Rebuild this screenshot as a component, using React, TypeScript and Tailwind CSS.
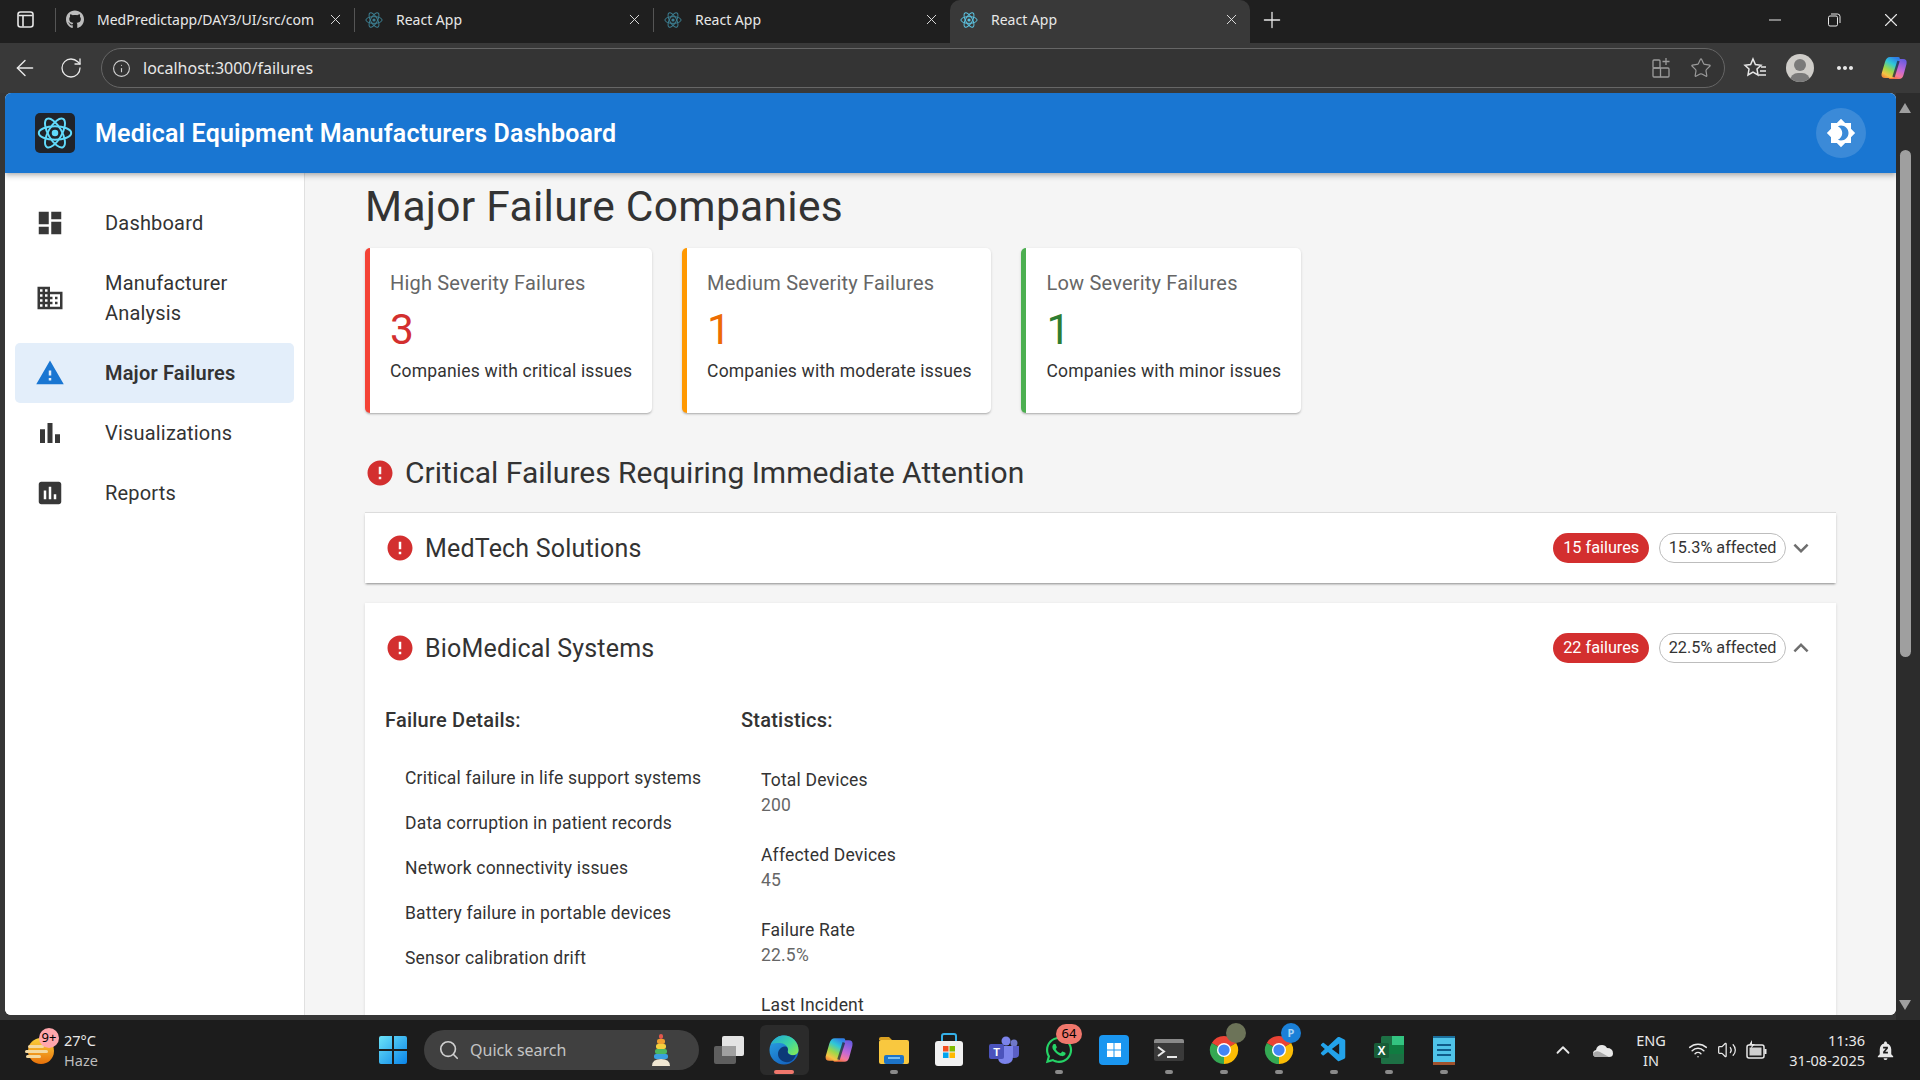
import {
  MdDashboard,
  MdDomain,
  MdWarning,
  MdBarChart,
  MdAssessment,
  MdError,
  MdExpandMore,
  MdExpandLess,
  MdBrightness4,
  MdMoreHoriz,
  MdNotificationsPaused,
} from "react-icons/md";
import { FaGithub, FaWhatsapp } from "react-icons/fa";
import { VscVscode } from "react-icons/vsc";
import { ArrowLeft, ChevronUp, Info, Plus, RotateCw, Search, Star, Volume2, Wifi, X } from "lucide-react";

const navItems = [
  { label: "Dashboard", icon: MdDashboard },
  { label: "Manufacturer Analysis", icon: MdDomain },
  { label: "Major Failures", icon: MdWarning, active: true },
  { label: "Visualizations", icon: MdBarChart },
  { label: "Reports", icon: MdAssessment },
];

const summary = [
  { title: "High Severity Failures", value: "3", text: "Companies with critical issues", border: "border-[#f44336]", color: "text-[#d32f2f]" },
  { title: "Medium Severity Failures", value: "1", text: "Companies with moderate issues", border: "border-[#ff9800]", color: "text-[#ed6c02]" },
  { title: "Low Severity Failures", value: "1", text: "Companies with minor issues", border: "border-[#4caf50]", color: "text-[#2e7d32]" },
];

const details = [
  "Critical failure in life support systems",
  "Data corruption in patient records",
  "Network connectivity issues",
  "Battery failure in portable devices",
  "Sensor calibration drift",
];

const stats = [
  { label: "Total Devices", value: "200" },
  { label: "Affected Devices", value: "45" },
  { label: "Failure Rate", value: "22.5%" },
  { label: "Last Incident" },
];

function Atom({ size = 18, color = "#61dafb" }: { size?: number; color?: string }) {
  return (
    <svg width={size} height={size} viewBox="0 0 40 40" fill="none" stroke={color} strokeWidth="2.2">
      <ellipse cx="20" cy="20" rx="18" ry="7.5" />
      <ellipse cx="20" cy="20" rx="18" ry="7.5" transform="rotate(60 20 20)" />
      <ellipse cx="20" cy="20" rx="18" ry="7.5" transform="rotate(120 20 20)" />
      <circle cx="20" cy="20" r="3.6" fill={color} stroke="none" />
    </svg>
  );
}

function Tab({ title, icon, width, active }: { title: string; icon: React.ReactNode; width: string; active?: boolean }) {
  return (
    <div className={`flex h-[43px] shrink-0 items-center pb-[4px] pl-[10px] text-[14px] text-[#e8e8e8] ${width} ${active ? "rounded-t-[10px] bg-[#393939]" : ""}`}>
      <span className="flex w-[18px] shrink-0 justify-center">{icon}</span>
      <span className="ml-[13px] flex-1 whitespace-nowrap">{title}</span>
      <X size={17} strokeWidth={1.3} className="mr-[10px] ml-[8px] shrink-0" />
    </div>
  );
}

function Divider() {
  return <div className="mb-[4px] h-[24px] w-px shrink-0 bg-[#555]" />;
}

function TabStrip() {
  return (
    <div className="flex h-[43px] items-center bg-[#1f1f1f] font-['Noto_Sans',sans-serif]">
      <div className="flex w-[55px] shrink-0 justify-center pb-[4px]">
        <svg width="19" height="19" viewBox="0 0 19 19" fill="none" stroke="#e6e6e6" strokeWidth="1.6" className="-ml-[4px]">
          <rect x="2" y="2" width="15" height="15" rx="2.5" />
          <path d="M2.5 5.5H16.5M7 5.5V16.5" />
        </svg>
      </div>
      <Divider />
      <Tab width="w-[298px]" title="MedPredictapp/DAY3/UI/src/com" icon={<FaGithub size={19} className="text-[#bcbcbc]" />} />
      <Divider />
      <Tab width="w-[298px]" title="React App" icon={<Atom size={18} color="#3d7f92" />} />
      <Divider />
      <Tab width="w-[296px]" title="React App" icon={<Atom size={18} color="#3d7f92" />} />
      <Tab width="w-[300px]" active title="React App" icon={<Atom size={18} color="#5cc4e2" />} />
      <Plus size={26} strokeWidth={1.2} className="mb-[4px] ml-[9px] text-[#e8e8e8]" />
      <div className="mb-[4px] ml-auto flex items-center text-[#e8e8e8]">
        <svg width="14" height="14" viewBox="0 0 14 14" stroke="currentColor" className="mr-[45px]"><path d="M1 7H13" /></svg>
        <svg width="14" height="14" viewBox="0 0 14 14" fill="none" stroke="currentColor" className="mr-[39px]"><rect x="1.5" y="3" width="9" height="10" rx="1.5" /><path d="M4 1H10.5Q13 1 13 3.5V10" /></svg>
        <X size={22} strokeWidth={1.2} className="mr-[18px]" />
      </div>
    </div>
  );
}

function Toolbar() {
  return (
    <div className="flex h-[50px] items-center bg-[#393939] font-['Noto_Sans',sans-serif] text-[#e8e8e8]">
      <ArrowLeft size={26} strokeWidth={1.3} className="ml-[12px]" />
      <RotateCw size={24} strokeWidth={1.3} className="ml-[21px]" />
      <div className="ml-[18px] flex h-[40px] w-[1624px] items-center rounded-[20px] border border-[#666] bg-[#343434] pl-[10px]">
        <Info size={19} strokeWidth={1.4} className="text-[#cfcfcf]" />
        <span className="ml-[12px] text-[16px]">localhost:3000/failures</span>
        <div className="mr-[12px] ml-auto flex items-center gap-[18px] text-[#9a9a9a]">
          <svg width="20" height="22" viewBox="0 0 20 22" fill="none" stroke="currentColor" strokeWidth="1.3">
            <rect x="1" y="3" width="7" height="8" rx="1" />
            <rect x="1" y="11" width="16" height="9" rx="1" />
            <path d="M8.5 11V20M14 1V8M10.5 4.5H17.5" />
          </svg>
          <Star size={22} strokeWidth={1.3} />
        </div>
      </div>
      <svg width="24" height="24" viewBox="0 0 24 24" fill="none" stroke="currentColor" strokeWidth="1.5" className="ml-[18px]">
        <path d="M10 3L12.4 8.6L18 9.2L14 13L15 19L10 16L5 19L6 13L2 9.2L7.6 8.6Z" />
        <path d="M18 11H23M17 15H23M15.5 19H23" />
      </svg>
      <div className="relative ml-[19px] h-[28px] w-[28px] overflow-hidden rounded-full bg-[#cfcdc9]">
        <div className="absolute top-[5px] left-[8px] h-[12px] w-[12px] rounded-full bg-[#7a7a7a]" />
        <div className="absolute top-[19px] left-[4px] h-[16px] w-[20px] rounded-full bg-[#7a7a7a]" />
      </div>
      <MdMoreHoriz size={24} className="ml-[19px]" />
      <div className="ml-[23px]"><Copilot id="cb" size={28} /></div>
    </div>
  );
}

function Copilot({ id, size = 28 }: { id: string; size?: number }) {
  return (
    <svg width={size} height={size} viewBox="0 0 28 28" fill="none">
      <defs>
        <linearGradient id={`${id}a`} x1="0.7" y1="0" x2="0.2" y2="1">
          <stop offset="0" stopColor="#2f7fe8" />
          <stop offset="0.3" stopColor="#2fc8d8" />
          <stop offset="0.6" stopColor="#9bd84a" />
          <stop offset="0.85" stopColor="#f6c445" />
          <stop offset="1" stopColor="#f08a3a" />
        </linearGradient>
        <linearGradient id={`${id}b`} x1="0.7" y1="0" x2="0.3" y2="1">
          <stop offset="0" stopColor="#6a5ce0" />
          <stop offset="0.5" stopColor="#c268d8" />
          <stop offset="0.8" stopColor="#f47a9a" />
          <stop offset="1" stopColor="#f2703a" />
        </linearGradient>
      </defs>
      <path d="M19 25H10Q8 25 9 22L13 8Q14 5 17 5H23Q27.5 5 26.5 10L23.5 21Q22.5 25 19 25Z" fill={`url(#${id}b)`} />
      <path d="M10 3H18Q20.5 3 19.5 6L15 21Q14 24 11 24H5Q1 24 1.5 20L5 8Q6.5 3 10 3Z" fill={`url(#${id}a)`} />
      <path d="M18.5 7L13.5 23" stroke="#26223a" strokeWidth="2.4" opacity="0.75" />
    </svg>
  );
}

function Sidebar() {
  return (
    <nav className="w-[300px] shrink-0 border-r border-[#e0e0e0] bg-white px-[10px] pt-[20px]">
      {navItems.map((item) => {
        const Icon = item.icon;
        return (
          <div key={item.label} className={`flex items-center rounded-[5px] px-[20px] py-[15px] ${item.active ? "bg-[#e3eefa]" : ""}`}>
            <Icon size={30} className={`shrink-0 ${item.active ? "text-[#1976d2]" : "text-[#383838]"}`} />
            <span className={`ml-[40px] text-[20px] leading-[30px] tracking-[0.19px] text-[#333] ${item.active ? "font-semibold" : ""}`}>{item.label}</span>
          </div>
        );
      })}
    </nav>
  );
}

function SummaryCard({ title, value, text, border, color }: { title: string; value: string; text: string; border: string; color: string }) {
  return (
    <div className={`rounded-[5px] border-l-[5px] bg-white pt-[20px] pr-[19.75px] pb-[29px] pl-[20px] shadow-[0_2px_2px_-1px_rgba(0,0,0,0.2),0_1px_3px_0_rgba(0,0,0,0.14)] ${border}`}>
      <div className="text-[20px] leading-[30px] tracking-[0.19px] text-[#666]">{title}</div>
      <div className={`mt-[6px] mb-[2.5px] text-[42.5px] leading-[52.5px] ${color}`}>{value}</div>
      <div className="text-[17.5px] leading-[25px] tracking-[0.19px] text-[#333]">{text}</div>
    </div>
  );
}

function AccordionHead({ name, failures, rate, open }: { name: string; failures: number; rate: string; open?: boolean }) {
  return (
    <div className={`flex items-center px-[20px] ${open ? "h-[90px]" : "h-[70px]"}`}>
      <MdError size={30} className="text-[#d32f2f]" />
      <span className="ml-[10px] pt-[2px] text-[25px] tracking-[0.19px] text-[#333]">{name}</span>
      <div className="ml-auto flex items-center gap-[10px]">
        <span className="flex h-[30px] items-center rounded-[15px] bg-[#d32f2f] px-[10px] text-[16.25px] text-white">{failures} failures</span>
        <span className="flex h-[30px] items-center rounded-[15px] border border-[#bdbdbd] px-[8.5px] text-[16.25px] text-[#333]">{rate} affected</span>
      </div>
      {open ? <MdExpandLess size={30} className="text-[#6e6e6e]" /> : <MdExpandMore size={30} className="text-[#6e6e6e]" />}
    </div>
  );
}

function MainContent() {
  return (
    <main className="flex-1 overflow-hidden bg-[#f5f5f5] px-[60px] pt-[7.5px]">
      <h1 className="text-[42.5px] leading-[52.5px] tracking-[0.3px] text-[#333]">Major Failure Companies</h1>
      <div className="mt-[15px] flex gap-[30px]">
        {summary.map((s) => (
          <SummaryCard key={s.title} {...s} />
        ))}
      </div>
      <div className="mt-[40px] flex h-[40px] items-center">
        <MdError size={30} className="text-[#d32f2f]" />
        <h2 className="ml-[10px] text-[30px] leading-[40px] text-[#333]">Critical Failures Requiring Immediate Attention</h2>
      </div>
      <section className="mt-[20px] bg-white shadow-[0_-1px_0_0_#dcdcdc,0_2px_2px_-1px_rgba(0,0,0,0.35),0_1px_3px_0_rgba(0,0,0,0.12)]">
        <AccordionHead name="MedTech Solutions" failures={15} rate="15.3%" />
      </section>
      <section className="mt-[20px] bg-white shadow-[0_1px_3px_0_rgba(0,0,0,0.12)]">
        <AccordionHead name="BioMedical Systems" failures={22} rate="22.5%" open />
        <div className="flex px-[20px] pt-[12px]">
          <div className="w-[356px] shrink-0">
            <h3 className="text-[20px] leading-[30px] font-medium tracking-[0.22px] text-[#333]">Failure Details:</h3>
            <ul className="mt-[21px]">
              {details.map((d) => (
                <li key={d} className="py-[10px] pl-[20px] text-[17.5px] leading-[25px] tracking-[0.19px] text-[#333]">{d}</li>
              ))}
            </ul>
          </div>
          <div>
            <h3 className="text-[20px] leading-[30px] font-medium tracking-[0.22px] text-[#333]">Statistics:</h3>
            <ul className="mt-[20px]">
              {stats.map((s) => (
                <li key={s.label} className="py-[12.5px] pl-[20px] text-[17.5px] leading-[25px] tracking-[0.19px]">
                  <div className="text-[#333]">{s.label}</div>
                  {s.value && <div className="text-[#666]">{s.value}</div>}
                </li>
              ))}
            </ul>
          </div>
        </div>
      </section>
    </main>
  );
}

function Scrollbar() {
  return (
    <div className="relative w-[24px] shrink-0 bg-[#2c2c2c]">
      <div className="absolute top-[10px] left-[3px] h-0 w-0 border-x-[6px] border-b-[10px] border-x-transparent border-b-[#9f9f9f]" />
      <div className="absolute top-[57px] left-[4px] h-[507px] w-[11px] rounded-full bg-[#9f9f9f]" />
      <div className="absolute bottom-[10px] left-[3px] h-0 w-0 border-x-[6px] border-t-[10px] border-x-transparent border-t-[#9f9f9f]" />
    </div>
  );
}

function Chrome() {
  return (
    <svg width="30" height="30" viewBox="0 0 32 32">
      <path d="M16 16L3 8.5A15 15 0 0 1 29 8.5Z" fill="#ea4335" />
      <path d="M16 16L16 31A15 15 0 0 1 3 8.5Z" fill="#34a853" />
      <path d="M16 16L29 8.5A15 15 0 0 1 16 31Z" fill="#fbbc04" />
      <circle cx="16" cy="16" r="7.5" fill="#fff" />
      <circle cx="16" cy="16" r="6" fill="#4285f4" />
    </svg>
  );
}

function Edge() {
  return (
    <svg width="30" height="30" viewBox="0 0 30 30">
      <defs>
        <linearGradient id="edge1" x1="0" y1="0" x2="0.6" y2="1">
          <stop offset="0" stopColor="#2ba6e6" />
          <stop offset="1" stopColor="#1565c0" />
        </linearGradient>
        <linearGradient id="edge2" x1="0" y1="0" x2="1" y2="0.8">
          <stop offset="0" stopColor="#1fa3dc" />
          <stop offset="0.6" stopColor="#3dd6a0" />
          <stop offset="1" stopColor="#7ee85c" />
        </linearGradient>
      </defs>
      <circle cx="15" cy="15" r="14.5" fill="url(#edge1)" />
      <path d="M2 9C5 3 10 .5 15 .5C23 .5 29.5 7 29.5 15C29.5 19 26 21 22 20C19 19 18 17 19 15C19 11 15 8 11 8C7 8 4 8 2 9Z" fill="url(#edge2)" />
      <path d="M20 27C14 28 9 24 9 19C9 15 12 12 15.5 11.5C18 11 19 13 19 15C18 17 19 19.5 22 20C24 20.5 26 20 27 19.5C26 23 23.5 26 20 27Z" fill="#0c3a78" />
    </svg>
  );
}

function TaskIcon({ children, dot, active }: { children: React.ReactNode; dot?: boolean; active?: boolean }) {
  return (
    <div className="relative flex h-[50px] w-[55px] shrink-0 items-center justify-center">
      {active && <span className="absolute inset-x-[3px] inset-y-0 rounded-[6px] bg-[#2b2b2b]" />}
      <span className="relative flex">{children}</span>
      {dot && <span className={`absolute bottom-[1px] left-1/2 h-[4px] -translate-x-1/2 rounded-full ${active ? "w-[20px] bg-[#f0776c]" : "w-[8px] bg-[#8a8a8a]"}`} />}
    </div>
  );
}

function Taskbar() {
  return (
    <div className="flex h-[60px] items-center bg-[#1c1c1c] font-['Noto_Sans',sans-serif] text-[#e8e8e8]">
      <div className="relative ml-[25px] h-[30px] w-[30px] shrink-0">
        <svg width="30" height="30" viewBox="0 0 30 30">
          <defs>
            <linearGradient id="sun" x1="0" y1="0" x2="0" y2="1">
              <stop offset="0" stopColor="#fbd23c" />
              <stop offset="1" stopColor="#e8710a" />
            </linearGradient>
          </defs>
          <circle cx="16" cy="16" r="13" fill="url(#sun)" />
          <rect x="3" y="10" width="16" height="3" rx="1.5" fill="#f4d9a0" />
          <rect x="0" y="15" width="23" height="3" rx="1.5" fill="#f4d9a0" />
          <rect x="1" y="20" width="15" height="3" rx="1.5" fill="#f4d9a0" />
        </svg>
        <span className="absolute -top-[7px] left-[14px] flex h-[20px] w-[20px] items-center justify-center rounded-full bg-[#ffa6ac] text-[13px] text-black">9+</span>
      </div>
      <div className="ml-[9px] w-[60px] shrink-0 text-[14.5px] leading-[20px]">
        <div>27°C</div>
        <div className="text-[#bdbdbd]">Haze</div>
      </div>
      <svg width="30" height="30" viewBox="0 0 30 30" className="ml-[254px] shrink-0">
        <defs>
          <linearGradient id="win" x1="0" y1="0" x2="1" y2="1">
            <stop offset="0" stopColor="#6be3f8" />
            <stop offset="1" stopColor="#0a84e8" />
          </linearGradient>
        </defs>
        <path d="M1 3Q1 1 3 1H14V14H1ZM16 1H27Q29 1 29 3V14H16ZM1 16H14V29H3Q1 29 1 27ZM16 16H29V27Q29 29 27 29H16Z" fill="url(#win)" />
      </svg>
      <div className="ml-[16px] flex h-[40px] w-[275px] shrink-0 items-center rounded-[20px] bg-[#404040] pl-[14px]">
        <Search size={22} strokeWidth={1.8} className="text-[#d0d0d0]" />
        <span className="ml-[10px] text-[16px] text-[#c4c4c4]">Quick search</span>
        <svg width="20" height="34" viewBox="0 0 20 34" className="ml-[85px] shrink-0">
          <rect x="8" y="1" width="4" height="5" rx="2" fill="#e2574c" />
          <rect x="6" y="6" width="8" height="5" rx="2" fill="#f0a030" />
          <rect x="5" y="11" width="10" height="5" rx="2" fill="#f4d03f" />
          <rect x="4" y="16" width="12" height="5" rx="2" fill="#4cb860" />
          <rect x="3" y="21" width="14" height="5" rx="2" fill="#3aa0e0" />
          <path d="M1 33Q1 26 10 26Q19 26 19 33Z" fill="#efe6d2" />
        </svg>
      </div>
      <svg width="30" height="28" viewBox="0 0 30 28" className="ml-[15px] shrink-0">
        <rect x="0" y="10" width="22" height="18" rx="2" fill="#5e5e5e" />
        <rect x="8" y="0" width="22" height="20" rx="2" fill="#e4e4e4" />
        <rect x="8" y="10" width="14" height="10" fill="#a0a0a0" />
      </svg>
      <div className="ml-[12.5px] flex items-center">
        <TaskIcon active dot><Edge /></TaskIcon>
        <TaskIcon><Copilot id="ct" size={30} /></TaskIcon>
        <TaskIcon dot>
          <svg width="30" height="28" viewBox="0 0 30 28">
            <path d="M0 3Q0 1 2 1H10L13 4H0Z" fill="#d9a021" />
            <rect x="0" y="4" width="30" height="24" rx="2" fill="#f9c83f" />
            <rect x="5" y="19" width="20" height="9" rx="2" fill="#1d74c8" />
            <rect x="9" y="21" width="12" height="2" fill="#7cc0f0" />
          </svg>
        </TaskIcon>
        <TaskIcon>
          <svg width="30" height="34" viewBox="0 0 30 34">
            <path d="M8 9V3Q8 1 10 1H20Q22 1 22 3V9" fill="none" stroke="#35b0e8" strokeWidth="2" />
            <rect x="1" y="8" width="28" height="25" rx="3" fill="#f1f1f1" />
            <rect x="9" y="13" width="5.5" height="5.5" fill="#f25022" />
            <rect x="15.5" y="13" width="5.5" height="5.5" fill="#7fba00" />
            <rect x="9" y="19.5" width="5.5" height="5.5" fill="#00a4ef" />
            <rect x="15.5" y="19.5" width="5.5" height="5.5" fill="#ffb900" />
          </svg>
        </TaskIcon>
        <TaskIcon>
          <svg width="32" height="30" viewBox="0 0 32 30">
            <circle cx="26" cy="8" r="3.5" fill="#7078c8" />
            <circle cx="18" cy="6" r="4.5" fill="#7b83eb" />
            <path d="M22 11H31V19Q31 23 26 23Q22 23 22 19Z" fill="#5b5fc7" />
            <path d="M10 11H25V22Q25 29 17 29Q10 29 10 22Z" fill="#7b83eb" />
            <rect x="1" y="9" width="15" height="15" rx="2" fill="#4b53bc" />
            <text x="8.5" y="21" fontSize="11" fontWeight="bold" textAnchor="middle" fill="#fff" fontFamily="Liberation Sans, sans-serif">T</text>
          </svg>
        </TaskIcon>
        <TaskIcon dot>
          <FaWhatsapp size={30} className="text-[#25d366]" />
          <span className="absolute -top-[11px] left-[12px] flex h-[20px] w-[26px] items-center justify-center rounded-full bg-[#f0776c] text-[13px] text-black">64</span>
        </TaskIcon>
        <TaskIcon>
          <svg width="30" height="30" viewBox="0 0 30 30">
            <rect x="0" y="0" width="30" height="30" rx="4" fill="#1a96f0" />
            <path d="M8 8H14.5V14.5H8ZM15.5 8H22V14.5H15.5ZM8 15.5H14.5V22H8ZM15.5 15.5H22V22H15.5Z" fill="#fff" />
          </svg>
        </TaskIcon>
        <TaskIcon dot>
          <svg width="30" height="22" viewBox="0 0 30 22">
            <rect x="0" y="0" width="30" height="22" rx="2" fill="#3a3a3a" />
            <path d="M2 0H28Q30 0 30 2V4H0V2Q0 0 2 0Z" fill="#8a8a8a" />
            <path d="M4 8L10 12.5L4 17" fill="none" stroke="#e8e8e8" strokeWidth="2" />
            <path d="M13 18H23" stroke="#e8e8e8" strokeWidth="2" />
          </svg>
        </TaskIcon>
        <TaskIcon dot>
          <Chrome />
          <span className="absolute -top-[12px] left-[17px] h-[20px] w-[20px] rounded-full bg-[#6c7358]" />
        </TaskIcon>
        <TaskIcon dot>
          <Chrome />
          <span className="absolute -top-[12px] left-[17px] flex h-[20px] w-[20px] items-center justify-center rounded-full bg-[#1a80d8] text-[11px] font-bold text-[#a8d4f4]">P</span>
        </TaskIcon>
        <TaskIcon dot><VscVscode size={30} className="text-[#23a3ea]" /></TaskIcon>
        <TaskIcon dot>
          <svg width="30" height="28" viewBox="0 0 30 28">
            <rect x="7" y="0" width="23" height="28" rx="1.5" fill="#1d7044" />
            <rect x="18" y="0" width="12" height="9" fill="#33c481" />
            <rect x="7" y="9" width="23" height="9" fill="#107c41" />
            <rect x="0" y="7" width="15" height="15" rx="1.5" fill="#185c37" />
            <text x="7.5" y="18.5" fontSize="12" fontWeight="bold" textAnchor="middle" fill="#fff" fontFamily="Liberation Sans, sans-serif">X</text>
          </svg>
        </TaskIcon>
        <TaskIcon dot>
          <svg width="22" height="30" viewBox="0 0 22 30">
            <rect x="0" y="1" width="22" height="27" fill="#4fc3e8" />
            <rect x="0" y="27" width="22" height="3" fill="#a0522d" />
            <path d="M4 10H18M4 15H18M4 20H18" stroke="#0f5c8a" strokeWidth="2.2" />
            <path d="M0 1H22V3H0Z" fill="#1b6f9c" />
          </svg>
        </TaskIcon>
      </div>
      <ChevronUp size={22} strokeWidth={2} className="ml-[80.5px] shrink-0" />
      <svg width="20" height="13" viewBox="0 0 20 13" className="ml-[19px] shrink-0">
        <path d="M4 13Q0 13 0 9.5Q0 6.5 3 6Q4 1 9 1Q12.5 1 14 4Q20 4 20 9.5Q20 13 16 13Z" fill="#e8e8e8" />
        <path d="M4 13Q0 13 0 9.5Q3 6 7 8L16 13Z" fill="#a8a8a8" />
      </svg>
      <div className="ml-[18px] w-[40px] shrink-0 text-center text-[14.5px] leading-[20px]">
        <div>ENG</div>
        <div>IN</div>
      </div>
      <Wifi size={20} strokeWidth={1.8} className="ml-[17px] shrink-0" />
      <Volume2 size={20} strokeWidth={1.5} className="ml-[9px] shrink-0" />
      <svg width="22" height="20" viewBox="0 0 22 20" fill="none" className="ml-[9px] shrink-0">
        <rect x="1" y="5" width="17" height="13" rx="2" stroke="#e8e8e8" strokeWidth="1.5" />
        <rect x="3.5" y="7.5" width="12" height="8" fill="#cfcfcf" />
        <path d="M19.5 9V14" stroke="#e8e8e8" strokeWidth="2" />
        <path d="M6 0L3 5H6L4.5 9L9 4H6Z" fill="#e8e8e8" />
      </svg>
      <div className="ml-[13px] w-[84px] shrink-0 text-right text-[14.5px] leading-[20px] whitespace-nowrap">
        <div>11:36</div>
        <div>31-08-2025</div>
      </div>
      <MdNotificationsPaused size={23} className="ml-[9px] shrink-0" />
    </div>
  );
}

export default function App() {
  return (
    <div className="flex h-screen w-full flex-col overflow-hidden bg-[#363636] font-['Roboto',sans-serif]">
      <TabStrip />
      <Toolbar />
      <div className="flex min-h-0 flex-1 pl-[5px]">
        <div className="mb-[5px] flex min-w-0 flex-1 flex-col overflow-hidden rounded-[6px] bg-white">
          <header className="z-10 flex h-[80px] shrink-0 items-center bg-[#1976d2] pl-[30px] shadow-[0_2px_4px_-1px_rgba(0,0,0,0.2),0_4px_5px_0_rgba(0,0,0,0.14)]">
            <div className="flex h-[40px] w-[40px] items-center justify-center rounded-[5px] bg-[#20232a]">
              <Atom size={36} />
            </div>
            <h1 className="ml-[20px] pt-[2px] text-[25px] font-semibold tracking-[0.19px] text-white">Medical Equipment Manufacturers Dashboard</h1>
            <button className="mr-[30px] ml-auto flex h-[50px] w-[50px] items-center justify-center rounded-full bg-white/15">
              <MdBrightness4 size={30} className="text-white" />
            </button>
          </header>
          <div className="flex min-h-0 flex-1">
            <Sidebar />
            <MainContent />
          </div>
        </div>
        <Scrollbar />
      </div>
      <Taskbar />
    </div>
  );
}
